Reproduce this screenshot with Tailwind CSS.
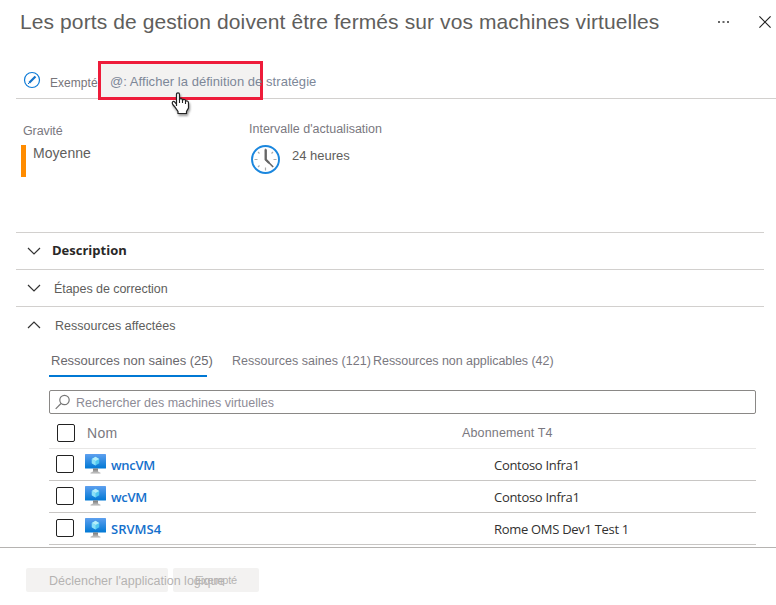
<!DOCTYPE html>
<html lang="fr">
<head>
<meta charset="utf-8">
<title>Recommandation</title>
<script src="https://cdn.jsdelivr.net/npm/@tailwindcss/browser@4"></script>
</head>
<body class="w-[776px] h-[605px] overflow-hidden bg-white font-['Liberation_Sans',Arial,sans-serif] text-[12.5px] text-[#605e5c] whitespace-nowrap">
<svg width="0" height="0" class="absolute">
  <defs>
    <linearGradient id="screen" x1="0" y1="0" x2="0" y2="1"><stop offset="0" stop-color="#5ea0ef"/><stop offset="1" stop-color="#0078d4"/></linearGradient>
    <linearGradient id="stand" x1="0" y1="0" x2="0" y2="1"><stop offset="0" stop-color="#777"/><stop offset="1" stop-color="#ccc"/></linearGradient>
    <symbol id="vm" viewBox="0 0 21 20">
      <rect width="21" height="14.5" rx=".6" fill="url(#screen)"/>
      <path d="M8 14.5h5v3l2.500 1.200v1h-10v-1l2.500-1.200z" fill="url(#stand)"/>
      <path d="M10.500 2.800l3.700 2.100v4.300l-3.700 2.200-3.700-2.200V4.900z" fill="#50c8f0"/>
      <path d="M10.500 2.800l3.700 2.100-3.700 2.200-3.700-2.200z" fill="#b5eefa"/>
      <path d="M6.800 4.900l3.700 2.200v4.300l-3.700-2.200z" fill="#8be0f7"/>
    </symbol>
  </defs>
</svg>

<header class="h-[60px] pl-[20px] pr-[5px] flex items-start">
  <h1 class="mt-[10px] text-[21px] leading-[24px] tracking-[0.1px]">Les ports de gestion doivent être fermés sur vos machines virtuelles</h1>
  <svg class="ml-auto mt-[20px] mr-[29px] shrink-0" width="13" height="4" fill="#666"><rect x="1" y="1" width="2" height="2"/><rect x="5.500" y="1" width="2" height="2"/><rect x="10" y="1" width="2" height="2"/></svg>
  <svg class="mt-[16px] shrink-0" width="12" height="12" stroke="#222" stroke-width="1.200"><path d="M.4.4l11.200 11.200M11.600.4L.4 11.600"/></svg>
</header>

<div class="ml-[16px] h-[39px] border-b border-[#d2d0ce] flex items-start relative">
  <svg class="ml-[7px] mt-[11px]" width="18" height="18" fill="none"><circle cx="9" cy="9" r="7.500" stroke="#0f7cd8" stroke-width="1.200"/><path d="M6.200 11.800l6.300-6.300" stroke="#1472c8" stroke-width="2.200"/><path d="M5 13l1.800-1.800" stroke="#1472c8"/></svg>
  <span class="ml-[9px] mt-[15px] leading-[16px] text-[12px] tracking-[0.05px] text-[#77757a]">Exempté</span>
  <div class="absolute left-[82px] top-[1px] w-[165px] h-[39px] border-3 border-[#ee1c3a] bg-[#f3f2f1]"></div>
  <span class="absolute left-[94px] top-[14px] leading-[16px] text-[13px] tracking-[0.05px] text-[#7d8798]">@: Afficher la définition de stratégie</span>
  <svg class="absolute left-[154px] top-[31px] drop-shadow-[1px_2px_1px_rgba(0,0,0,.4)]" width="21" height="25"><path d="M6.500 15V3.500Q6.500 1.800 8 1.800T9.500 3.500V9Q9.500 7.500 11 7.700T12.500 9.500Q13 8 14.500 8.500T15.500 10.500Q16 9.500 17.300 10T18.500 12V17L16.500 20.500V22.500H8V20.500L4.500 15.500Q1.500 12.500 2.500 11T5 11.300L6.500 13" fill="#fff" stroke="#222" stroke-width="1.200"/><path d="M9.500 8v4M12.500 9v3M15.500 10v3" stroke="#222" stroke-width="1.100"/></svg>
</div>

<section class="h-[133px] pl-[21px] flex">
  <div class="w-[228px] pt-[24px]">
    <div class="pl-[2px] leading-[16px] tracking-[-0.1px] text-[#7a7880]">Gravité</div>
    <div class="mt-[6px] h-[32px] border-l-5 border-[#ff8c00] pl-[7px] text-[14px] leading-[17px] tracking-[0.05px]">Moyenne</div>
  </div>
  <div class="pt-[22px]">
    <div class="leading-[16px] text-[#7a7880]">Intervalle d'actualisation</div>
    <div class="mt-[7px] flex">
      <svg class="ml-[1px]" width="31" height="31" fill="none"><circle cx="15.500" cy="15.500" r="13.500" stroke="#1b87de" stroke-width="1.900"/><path d="M15.500 4.500v3M15.500 23.500v3M4.500 15.500h3M23.500 15.500h3M8 8l1.500 1.500M23 8l-1.500 1.500M8 23l1.500-1.500" stroke="#aaa" stroke-width="1.200"/><path d="M15.700 5.500v10l7.500 7.500" stroke="#666" stroke-width="1.600"/><path d="M15.700 5.500v10l3.500 3.500" stroke="#666" stroke-width="2.200"/></svg>
      <span class="ml-[11px] mt-[4px] leading-[16px] text-[13px]">24 heures</span>
    </div>
  </div>
</section>

<div class="ml-[16px] w-[748px]">
  <div class="h-[37px] border-t border-[#d2d0ce] flex items-center pl-[11px]">
    <svg width="14" height="8" fill="none" stroke="#333" stroke-width="1.200"><path d="M1 1l6 6 6-6"/></svg>
    <b class="ml-[11px] mb-[2px] font-['Open_Sans',sans-serif] text-[13px] leading-[18px] text-[#292827]">Description</b>
  </div>
  <div class="h-[37px] border-t border-[#d2d0ce] flex items-center pl-[11px]">
    <svg width="14" height="8" fill="none" stroke="#333" stroke-width="1.200"><path d="M1 1l6 6 6-6"/></svg>
    <span class="ml-[13px] mt-[2px] tracking-[-0.05px] leading-[16px]">Étapes de correction</span>
  </div>
  <div class="h-[37px] border-t border-[#d2d0ce] flex items-center pl-[11px]">
    <svg width="14" height="8" fill="none" stroke="#333" stroke-width="1.200"><path d="M1 7l6-6 6 6"/></svg>
    <span class="ml-[14px] mt-[2px] tracking-[0.03px] leading-[16px]">Ressources affectées</span>
  </div>
</div>

<main class="ml-[49px] w-[707px] text-[#7a7880]">
  <nav class="h-[34px] flex pt-[10px] leading-[16px]">
    <div class="w-[158px] h-[24px] border-b-2 border-[#0078d4] pl-[2px] text-[13px] text-[#6a686d]">Ressources non saines (25)</div>
    <div class="ml-[25px] w-[141px] tracking-[0.03px]">Ressources saines (121)</div>
    <div class="tracking-[-0.05px]">Ressources non applicables (42)</div>
  </nav>
  <div class="mt-[13px] h-[24px] border border-[#8a8886] rounded-[2px] flex items-center pl-[5px]">
    <svg width="15" height="16" fill="none" stroke="#777" stroke-width="1.200"><circle cx="9.500" cy="6" r="4.700"/><path d="M6 9.500L.7 14.800"/></svg>
    <span class="ml-[6px] mt-[1px] leading-[16px] text-[#8d8b96]">Rechercher des machines virtuelles</span>
  </div>
  <div class="h-[35px] border-b border-[#e8e7e6] flex items-center pl-[8px]">
    <i class="size-[18px] mt-[3px] border border-[#222] rounded-[2px]"></i>
    <span class="ml-[12px] mt-[4px] w-[375px] text-[14px] leading-[17px] tracking-[0.3px]">Nom</span>
    <span class="mt-[4px] leading-[16px] tracking-[0.15px]">Abonnement T4</span>
  </div>
  <div class="font-['Open_Sans','Noto_Sans',sans-serif] text-[13px] leading-[18px] text-[#323130]">
    <div class="h-[32px] border-b border-[#c8c6c4] flex items-center pl-[7px] pb-[2px]">
      <i class="size-[18px] border border-[#222] rounded-[2px]"></i><svg class="ml-[11px]" width="21" height="20"><use href="#vm"/></svg>
      <span class="ml-[5px] mt-[2px] w-[383px] font-semibold tracking-[-0.3px] text-[#1570cc]">wncVM</span><span class="mt-[2px] tracking-[-0.3px]">Contoso Infra1</span>
    </div>
    <div class="h-[32px] border-b border-[#c8c6c4] flex items-center pl-[7px] pb-[2px]">
      <i class="size-[18px] border border-[#222] rounded-[2px]"></i><svg class="ml-[11px]" width="21" height="20"><use href="#vm"/></svg>
      <span class="ml-[5px] mt-[2px] w-[383px] font-semibold tracking-[-0.3px] text-[#1570cc]">wcVM</span><span class="mt-[2px] tracking-[-0.3px]">Contoso Infra1</span>
    </div>
    <div class="h-[32px] border-b border-[#c8c6c4] flex items-center pl-[7px] pb-[2px]">
      <i class="size-[18px] border border-[#222] rounded-[2px]"></i><svg class="ml-[11px]" width="21" height="20"><use href="#vm"/></svg>
      <span class="ml-[5px] mt-[2px] w-[383px] font-semibold text-[#1570cc]">SRVMS4</span><span class="mt-[2px] tracking-[-0.3px]">Rome OMS Dev1 Test 1</span>
    </div>
  </div>
</main>

<footer class="mt-[2px] h-[58px] border-t border-[#b5b3b1] pt-[20px] pl-[26px] flex gap-[5px] text-[#b5b3b2]">
  <div class="w-[142px] h-[24px] rounded-[2px] bg-[#f3f2f1] pl-[23px] pt-[5px] leading-[16px]"><span class="relative z-10">Déclencher l'application logique</span></div>
  <div class="w-[86px] h-[24px] rounded-[2px] bg-[#f3f2f1] pl-[22px] pt-[4px] text-[11px] tracking-[-0.2px] leading-[16px]">Exempté</div>
</footer>
</body>
</html>
